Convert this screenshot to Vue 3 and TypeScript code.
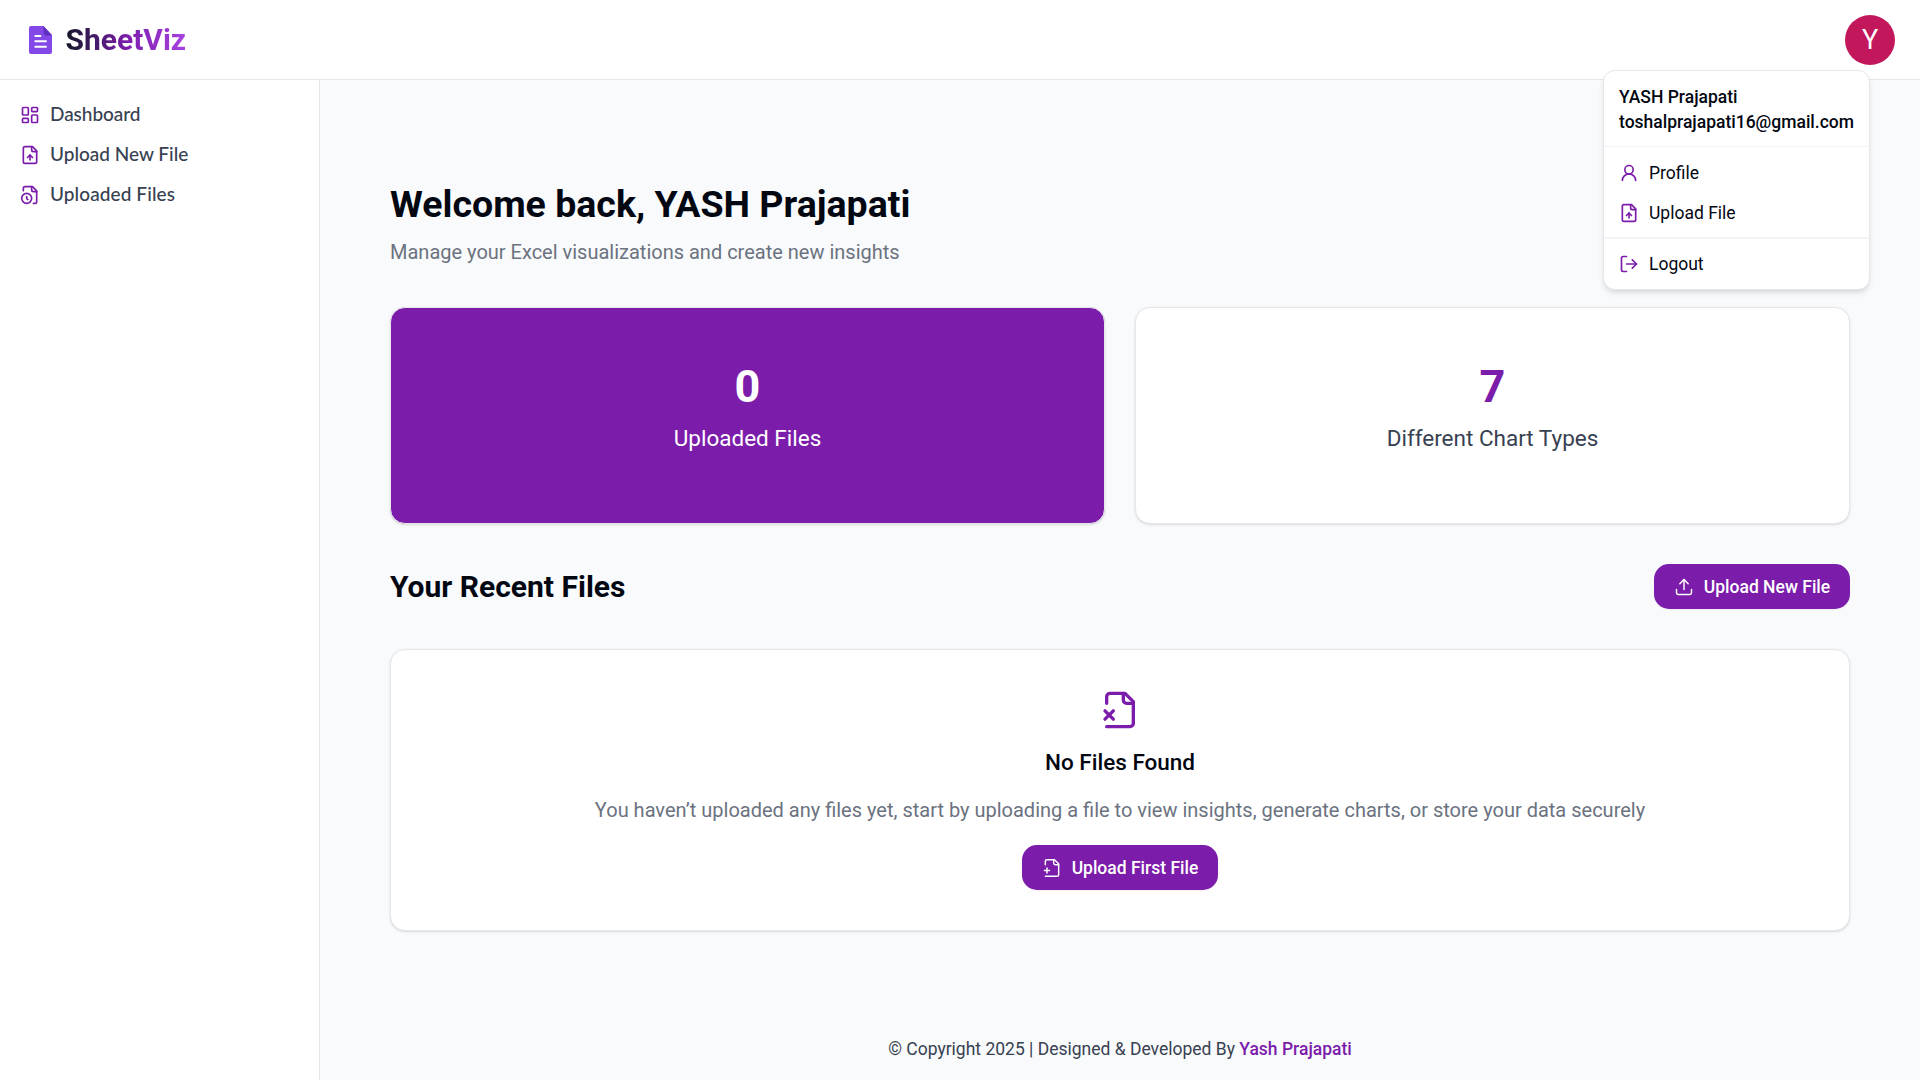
<script setup lang="ts">
import { h, type FunctionalComponent } from 'vue'

type Shape = [string, Record<string, string | number>]

const p = (d: string): Shape => ['path', { d }]

const fold = p('M14 2v4a2 2 0 0 0 2 2h4')

const icons: Record<string, Shape[]> = {
  dashboard: [
    ['rect', { width: 7, height: 9, x: 3, y: 3, rx: 1 }],
    ['rect', { width: 7, height: 5, x: 14, y: 3, rx: 1 }],
    ['rect', { width: 7, height: 9, x: 14, y: 12, rx: 1 }],
    ['rect', { width: 7, height: 5, x: 3, y: 16, rx: 1 }],
  ],
  fileUp: [
    p('M15 2H6a2 2 0 0 0-2 2v16a2 2 0 0 0 2 2h12a2 2 0 0 0 2-2V7Z'),
    fold,
    p('M12 12v6'),
    p('m15 15-3-3-3 3'),
  ],
  fileClock: [
    p('M16 22h2a2 2 0 0 0 2-2V7l-5-5H6a2 2 0 0 0-2 2v3'),
    fold,
    ['circle', { cx: 8, cy: 16, r: 6 }],
    p('M9.5 17.5 8 16.25V14'),
  ],
  user: [['circle', { cx: 12, cy: 8, r: 5 }], p('M20 21a8 8 0 0 0-16 0')],
  logout: [p('m16 17 5-5-5-5'), p('M21 12H9'), p('M9 21H5a2 2 0 0 1-2-2V5a2 2 0 0 1 2-2h4')],
  upload: [p('M12 3v12'), p('m17 8-5-5-5 5'), p('M21 15v4a2 2 0 0 1-2 2H5a2 2 0 0 1-2-2v-4')],
  fileX: [
    p('M4 22h14a2 2 0 0 0 2-2V7l-5-5H6a2 2 0 0 0-2 2v4'),
    fold,
    p('m8 12.5-5 5'),
    p('m3 12.5 5 5'),
  ],
  filePlus: [
    p('M4 22h14a2 2 0 0 0 2-2V7l-5-5H6a2 2 0 0 0-2 2v4'),
    fold,
    p('M3 15h6'),
    p('M6 12v6'),
  ],
}

const Icon: FunctionalComponent<{ name: string; size: number; stroke?: number }> = (props) =>
  h(
    'svg',
    {
      width: props.size,
      height: props.size,
      viewBox: '0 0 24 24',
      fill: 'none',
      stroke: 'currentColor',
      'stroke-width': props.stroke ?? 2,
      'stroke-linecap': 'round',
      'stroke-linejoin': 'round',
    },
    icons[props.name].map(([tag, attrs]) => h(tag, attrs)),
  )
Icon.props = ['name', 'size', 'stroke']

const nav = [
  { icon: 'dashboard', label: 'Dashboard', spacing: '-0.05px' },
  { icon: 'fileUp', label: 'Upload New File', spacing: '0px' },
  { icon: 'fileClock', label: 'Uploaded Files', spacing: '0.1px' },
]
</script>

<template>
  <div class="app">
    <header class="header">
      <a class="brand">
        <svg class="logo" width="23" height="28" viewBox="0 0 23 28">
          <path d="M2 0H14.500L23 9V26a2 2 0 0 1-2 2H2a2 2 0 0 1-2-2V2a2 2 0 0 1 2-2Z" fill="#8548e8" />
          <path d="M14.500 0 23 9.500H16.500L14.500 7.500Z" fill="#6030c0" />
          <path d="M6.300 10H11.500M6.300 15.300H17M6.300 20.700H17" stroke="#fff" stroke-width="1.900" stroke-linecap="round" />
        </svg>
        <span class="brand-name">SheetViz</span>
      </a>
      <div class="account">
        <button class="avatar">Y</button>
        <div class="menu">
          <div class="menu-head">
            <div>YASH Prajapati</div>
            <div>toshalprajapati16@gmail.com</div>
          </div>
          <div class="menu-group">
            <a class="menu-item"><Icon name="user" :size="20" />Profile</a>
            <a class="menu-item"><Icon name="fileUp" :size="20" />Upload File</a>
          </div>
          <div class="menu-group last">
            <a class="menu-item"><Icon name="logout" :size="20" />Logout</a>
          </div>
        </div>
      </div>
    </header>

    <div class="body">
      <aside class="sidebar">
        <a v-for="item in nav" :key="item.label" class="nav-item" :style="{ letterSpacing: item.spacing }">
          <Icon :name="item.icon" :size="20" /><span>{{ item.label }}</span>
        </a>
      </aside>

      <main class="main">
        <div class="content">
          <h1>Welcome back, YASH Prajapati</h1>
          <p class="subtitle">Manage your Excel visualizations and create new insights</p>

          <section class="stats">
            <div class="card stat primary">
              <div class="stat-value">0</div>
              <div class="stat-label">Uploaded Files</div>
            </div>
            <div class="card stat">
              <div class="stat-value">7</div>
              <div class="stat-label">Different Chart Types</div>
            </div>
          </section>

          <div class="section-head">
            <h2>Your Recent Files</h2>
            <button class="btn"><Icon name="upload" :size="20" :stroke="1.75" />Upload New File</button>
          </div>

          <section class="card empty">
            <Icon class="empty-icon" name="fileX" :size="40" />
            <h3>No Files Found</h3>
            <p>
              You haven’t uploaded any files yet, start by uploading a file to view insights, generate charts, or store
              your data securely
            </p>
            <button class="btn"><Icon name="filePlus" :size="20" :stroke="1.75" />Upload First File</button>
          </section>
        </div>

        <footer class="footer">© Copyright 2025 | Designed &amp; Developed By <b>Yash Prajapati</b></footer>
      </main>
    </div>
  </div>
</template>

<style>
body {
  margin: 0;
  overflow: hidden;
}
</style>

<style scoped>
* {
  box-sizing: border-box;
}
.app {
  height: 100vh;
  display: flex;
  flex-direction: column;
  font-family: Roboto, 'Liberation Sans', sans-serif;
  font-size: 17.5px;
  line-height: 28px;
  color: #030712;
  background: #f9fafb;
}
svg {
  display: block;
  flex: none;
}
h1,
h2,
h3,
p {
  margin: 0;
}
.header {
  flex: none;
  height: 80px;
  padding: 0 25px 0 29px;
  display: flex;
  align-items: center;
  justify-content: space-between;
  background: #fff;
  border-bottom: 1px solid #e5e7eb;
}
.brand {
  display: flex;
  align-items: center;
  gap: 13.5px;
}
.brand-name {
  font-size: 30px;
  line-height: 36px;
  font-weight: 700;
  background: linear-gradient(to right, #111827, #7b1cab 50%, #a843e0);
  background-clip: text;
  -webkit-background-clip: text;
  color: transparent;
}
.account {
  position: relative;
  z-index: 2;
}
.avatar {
  display: block;
  width: 50px;
  height: 50px;
  padding: 1px 0 0;
  border: 0;
  border-radius: 50%;
  background: #c2185b;
  color: #fff;
  font: 400 27px/49px Roboto, sans-serif;
}
.menu {
  position: absolute;
  top: 55px;
  right: 25px;
  width: 267px;
  background: #fff;
  border: 1px solid #e5e7eb;
  border-radius: 12px;
  box-shadow: 0 4px 6px -1px rgba(0, 0, 0, 0.1), 0 2px 4px -2px rgba(0, 0, 0, 0.1);
}
.menu-head {
  padding: 14px 15px 11px;
  font-weight: 500;
  line-height: 25px;
  white-space: nowrap;
}
.menu-group {
  padding: 6px 0 4px;
  border-top: 1px solid #f3f4f6;
}
.menu-group.last {
  padding: 5px 0;
  border-top-width: 2px;
}
.menu-item {
  height: 40px;
  padding: 0 15px;
  display: flex;
  align-items: center;
  gap: 10px;
}
.menu-item svg,
.nav-item svg {
  color: #7b1cab;
}
.body {
  flex: 1;
  min-height: 0;
  display: flex;
}
.sidebar {
  width: 320px;
  padding: 15px 20px;
  background: #fff;
  border-right: 1px solid #e5e7eb;
}
.nav-item {
  height: 40px;
  display: flex;
  align-items: center;
  gap: 10px;
  font-family: Lato, sans-serif;
  font-size: 19px;
  font-weight: 500;
  color: #374151;
}
.nav-item span {
  padding-bottom: 2px;
}
.main {
  flex: 1;
  display: flex;
  flex-direction: column;
  justify-content: space-between;
  background: #f9fafb;
}
.content {
  padding: 99px 70px 0;
}
h1 {
  font-size: 37.5px;
  line-height: 50px;
  font-weight: 700;
}
.subtitle {
  margin-top: 9px;
  font-size: 20px;
  color: #6b7280;
}
.card {
  background: #fff;
  border: 1px solid #e5e7eb;
  border-radius: 15px;
  box-shadow: 0 1px 3px rgba(0, 0, 0, 0.1), 0 1px 2px -1px rgba(0, 0, 0, 0.1);
}
.stats {
  margin-top: 41px;
  display: grid;
  grid-template-columns: 1fr 1fr;
  gap: 30px;
}
.stat {
  height: 217px;
  padding-top: 54px;
  text-align: center;
}
.stat-value {
  font-size: 45px;
  line-height: 50px;
  font-weight: 700;
  color: #7b1cab;
}
.stat-label {
  margin-top: 12px;
  font-size: 22.5px;
  color: #374151;
}
.primary {
  background: #7b1cab;
}
.primary .stat-value,
.primary .stat-label {
  color: #fff;
}
.section-head {
  margin-top: 40px;
  display: flex;
  align-items: center;
  justify-content: space-between;
}
h2 {
  font-size: 30px;
  line-height: 36px;
  font-weight: 700;
}
.btn {
  width: 196px;
  height: 45px;
  padding: 0;
  display: flex;
  align-items: center;
  justify-content: center;
  gap: 10px;
  border: 0;
  border-radius: 15px;
  background: #7b1cab;
  color: #fff;
  font: 500 17.5px/28px Roboto, sans-serif;
  box-shadow: 0 1px 2px rgba(0, 0, 0, 0.05);
}
.empty {
  height: 282px;
  margin-top: 40px;
  padding-top: 40px;
  display: flex;
  flex-direction: column;
  align-items: center;
}
.empty-icon {
  color: #7b1cab;
}
h3 {
  margin-top: 17px;
  font-size: 22.5px;
  line-height: 30px;
  font-weight: 500;
}
.empty p {
  margin-top: 19px;
  font-size: 20px;
  color: #6b7280;
}
.empty .btn {
  margin-top: 21px;
}
.footer {
  height: 61px;
  padding-top: 16px;
  text-align: center;
  color: #374151;
}
.footer b {
  font-weight: 500;
  color: #7b1cab;
}
</style>
